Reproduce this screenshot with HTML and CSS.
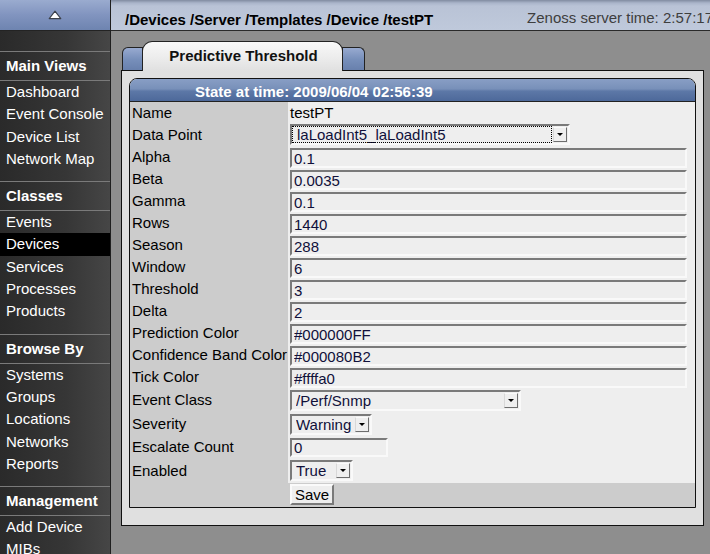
FILE: index.html
```html
<!DOCTYPE html>
<html>
<head>
<meta charset="utf-8">
<title>Predictive Threshold</title>
<link rel="stylesheet" href="styles.css">
</head>
<body>
<div class="app">
  <aside class="sidebar">
    <div class="side-head">
      <svg class="collapse" width="14" height="10" viewBox="0 0 14 10"><path d="M7 1.2 L12.8 8.6 L1.2 8.6 Z" fill="#fff" stroke="#3a3f4a" stroke-width="1.1" stroke-linejoin="round"/></svg>
    </div>
    <nav class="side-nav">
      <div class="sec-title">Main Views</div>
      <ul class="sec-items">
        <li>Dashboard</li>
        <li>Event Console</li>
        <li>Device List</li>
        <li>Network Map</li>
      </ul>
      <div class="sec-title">Classes</div>
      <ul class="sec-items">
        <li>Events</li>
        <li class="sel-item">Devices</li>
        <li>Services</li>
        <li>Processes</li>
        <li>Products</li>
      </ul>
      <div class="sec-title">Browse By</div>
      <ul class="sec-items">
        <li>Systems</li>
        <li>Groups</li>
        <li>Locations</li>
        <li>Networks</li>
        <li>Reports</li>
      </ul>
      <div class="sec-title">Management</div>
      <ul class="sec-items">
        <li>Add Device</li>
        <li>MIBs</li>
      </ul>
    </nav>
  </aside>
  <main class="main">
    <header class="topbar">
      <div class="crumbs">/Devices /Server /Templates /Device /testPT</div>
      <div class="srvtime">Zenoss server time: 2:57:17</div>
    </header>
    <div class="content">
      <div class="tabs">
        <div class="tab-side left"></div>
        <div class="tab-active">Predictive Threshold</div>
        <div class="tab-side right"></div>
      </div>
      <div class="panel">
        <div class="box">
          <div class="box-head">State at time: 2009/06/04 02:56:39</div>
          <div class="row"><div class="lbl">Name</div><div class="val plain">testPT</div></div>
          <div class="row"><div class="lbl">Data Point</div><div class="val top0"><div class="sel focus w-dp"><select><option>laLoadInt5_laLoadInt5</option></select><span class="btn"></span></div></div></div>
          <div class="row"><div class="lbl">Alpha</div><div class="val"><input class="inp" value="0.1"></div></div>
          <div class="row"><div class="lbl">Beta</div><div class="val"><input class="inp" value="0.0035"></div></div>
          <div class="row"><div class="lbl">Gamma</div><div class="val"><input class="inp" value="0.1"></div></div>
          <div class="row"><div class="lbl">Rows</div><div class="val"><input class="inp" value="1440"></div></div>
          <div class="row"><div class="lbl">Season</div><div class="val"><input class="inp" value="288"></div></div>
          <div class="row"><div class="lbl">Window</div><div class="val"><input class="inp" value="6"></div></div>
          <div class="row"><div class="lbl">Threshold</div><div class="val"><input class="inp" value="3"></div></div>
          <div class="row"><div class="lbl">Delta</div><div class="val"><input class="inp" value="2"></div></div>
          <div class="row"><div class="lbl">Prediction Color</div><div class="val"><input class="inp" value="#000000FF"></div></div>
          <div class="row"><div class="lbl">Confidence Band Color</div><div class="val"><input class="inp" value="#000080B2"></div></div>
          <div class="row"><div class="lbl">Tick Color</div><div class="val"><input class="inp" value="#ffffa0"></div></div>
          <div class="row h24"><div class="lbl">Event Class</div><div class="val"><div class="sel w-ec"><select><option>/Perf/Snmp</option></select><span class="btn"></span></div></div></div>
          <div class="row h24"><div class="lbl">Severity</div><div class="val"><div class="sel w-sev"><select><option>Warning</option></select><span class="btn"></span></div></div></div>
          <div class="row h23"><div class="lbl">Escalate Count</div><div class="val"><input class="inp short" value="0"></div></div>
          <div class="row h24"><div class="lbl">Enabled</div><div class="val top1"><div class="sel w-en"><select><option>True</option></select><span class="btn"></span></div></div></div>
          <div class="row h24 save-row"><div class="lbl"></div><div class="val top1"><button class="save">Save</button></div></div>
        </div>
      </div>
    </div>
  </main>
</div>
</body>
</html>
```
FILE: styles.css
```css
* { box-sizing: border-box; }
html, body { margin: 0; padding: 0; height: 100%; overflow: hidden; }
body {
  background: #8e8e8e;
  font-family: "Liberation Sans", Arial, Helvetica, sans-serif;
  font-size: 15px;
  color: #000;
}
.app { display: flex; height: 100%; }

/* Sidebar */
.sidebar {
  flex: 0 0 111px;
  width: 111px;
  background: linear-gradient(to right, #2a2a2a, #363636 60%, #464646);
  border-right: 1px solid #1f1f1f;
  color: #fff;
  overflow: hidden;
}
.side-head {
  height: 31px;
  border-bottom: 1px solid #232323;
  background: linear-gradient(#9aabcf, #8194bf 50%, #6e84b0);
  display: flex;
  justify-content: center;
  padding-top: 10px;
}
.side-nav { padding-top: 20px; }
.sec-title {
  height: 30px;
  border-top: 1px solid #7a7a7a;
  border-bottom: 1px solid #7a7a7a;
  padding: 0 0 1px 6px;
  line-height: 27px;
  font-weight: bold;
  white-space: nowrap;
}
.sec-items { list-style: none; margin: 0; padding: 0 0 11px; }
.sec-items li {
  height: 22.3px;
  line-height: 22.3px;
  padding-left: 6px;
  white-space: nowrap;
}
.sec-items li.sel-item { background: #000; }

/* Main */
.main { flex: 1; min-width: 0; display: flex; flex-direction: column; }
.topbar {
  height: 31px;
  flex: 0 0 31px;
  border-bottom: 1px solid #2a2a2a;
  background: linear-gradient(#808ba0 0, #aab5ca 3px, #b9c3d6 6px, #bfc9db 100%);
  display: flex;
  align-items: flex-start;
  white-space: nowrap;
  overflow: hidden;
}
.crumbs { font-weight: bold; padding: 11px 0 0 14px; line-height: 17px; }
.srvtime {
  margin-left: auto;
  margin-right: -3px;
  padding-top: 9px;
  line-height: 17px;
  color: #3e3e3e;
}
.content { padding: 10px 6px 0 10px; }

/* Tabs */
.tabs { display: flex; height: 30px; margin-bottom: -1px; padding-left: 1px; }
.tab-side {
  width: 21px;
  height: 23px;
  margin-top: 6px;
  border: 1px solid #222;
  border-bottom: none;
  background: linear-gradient(#98aad0, #7890bb 50%, #6880ad);
}
.tab-side.left { border-radius: 6px 0 0 0; }
.tab-side.right { border-radius: 0 6px 0 0; margin-left: -1px; width: 23px; }
.tab-active {
  position: relative;
  z-index: 1;
  margin-left: -1px;
  width: 201px;
  height: 30px;
  border: 1px solid #222;
  border-bottom: none;
  border-radius: 10px 10px 0 0;
  background: linear-gradient(#f8f8f8, #ececec 55%, #e0e0e0);
  text-align: center;
  font-weight: bold;
  padding: 5px 0 0 2px;
  line-height: 17px;
  color: #111;
}

/* Panel */
.panel {
  border: 1px solid #111;
  background: #e0e0e0;
  padding: 7px 7px 17px 7px;
}
.box {
  border: 1px solid #111;
  border-radius: 8px 8px 0 0;
  overflow: hidden;
  background: #eee;
}
.box-head {
  height: 23px;
  padding: 3px 0 0 65px;
  line-height: 19px;
  border-bottom: 1px solid #222;
  color: #fff;
  font-weight: bold;
  white-space: nowrap;
  background: linear-gradient(#889ec5 0%, #7890b9 45%, #5d78a7 55%, #4d699a 100%);
}

/* Form rows */
.row { display: grid; grid-template-columns: 158px 1fr; height: 22px; }
.row.h24 { height: 24px; }
.row.h23 { height: 23px; }
.lbl {
  background: #ccc;
  padding-left: 2px;
  line-height: 22px;
  white-space: nowrap;
}
.row.h24 .lbl { line-height: 24px; }
.val { background: #eee; padding: 2px 0 0 2px; }
.val.plain { padding-top: 0; line-height: 22px; }
.val.top0 { padding-top: 0; }
.val.top1 { padding-top: 1px; }
.save-row .val { background: #ccc; }

.inp {
  display: block;
  width: 397px;
  height: 20px;
  margin: 0;
  padding: 0 0 0 2px;
  border: 2px solid;
  border-color: #7a7a7a #f9f9f9 #f9f9f9 #7a7a7a;
  background: #eee;
  font: 15px "Liberation Sans", Arial, sans-serif;
  color: #10103a;
  outline: none;
}
.inp.short { width: 98px; height: 19px; }

.sel {
  display: flex;
  align-items: center;
  height: 21px;
  border: 2px solid;
  border-color: #7a7a7a #f9f9f9 #f9f9f9 #7a7a7a;
  background: #eee;
}
.sel select {
  -webkit-appearance: none;
  appearance: none;
  flex: 1;
  min-width: 0;
  height: 17px;
  margin: 0;
  padding: 0 0 0 4px;
  border: none;
  background: transparent;
  font: 15px "Liberation Sans", Arial, sans-serif;
  color: #10103a;
  outline: none;
}
.sel.focus select { outline: 1px dotted #000; outline-offset: -1px; padding-left: 5px; }
.sel .btn {
  flex: 0 0 14px;
  height: 15px;
  margin: 0 1px 0 1px;
  border: 1px solid;
  border-color: #fafafa #6e6e6e #6e6e6e #d8d8d8;
  background: #efefef;
  display: flex;
  align-items: center;
  justify-content: center;
}
.sel .btn::after {
  content: "";
  width: 0;
  height: 0;
  border-left: 3px solid transparent;
  border-right: 3px solid transparent;
  border-top: 3px solid #000;
}
.w-dp { width: 280px; }
.w-ec { width: 231px; }
.w-sev { width: 82px; }
.w-en { width: 63px; }

.save {
  height: 21px;
  margin: 0;
  padding: 0 3px;
  border: 2px solid;
  border-color: #fafafa #7a7a7a #7a7a7a #fafafa;
  background: #eee;
  font: 15px "Liberation Sans", Arial, sans-serif;
  color: #000;
  line-height: 15px;
}
```
